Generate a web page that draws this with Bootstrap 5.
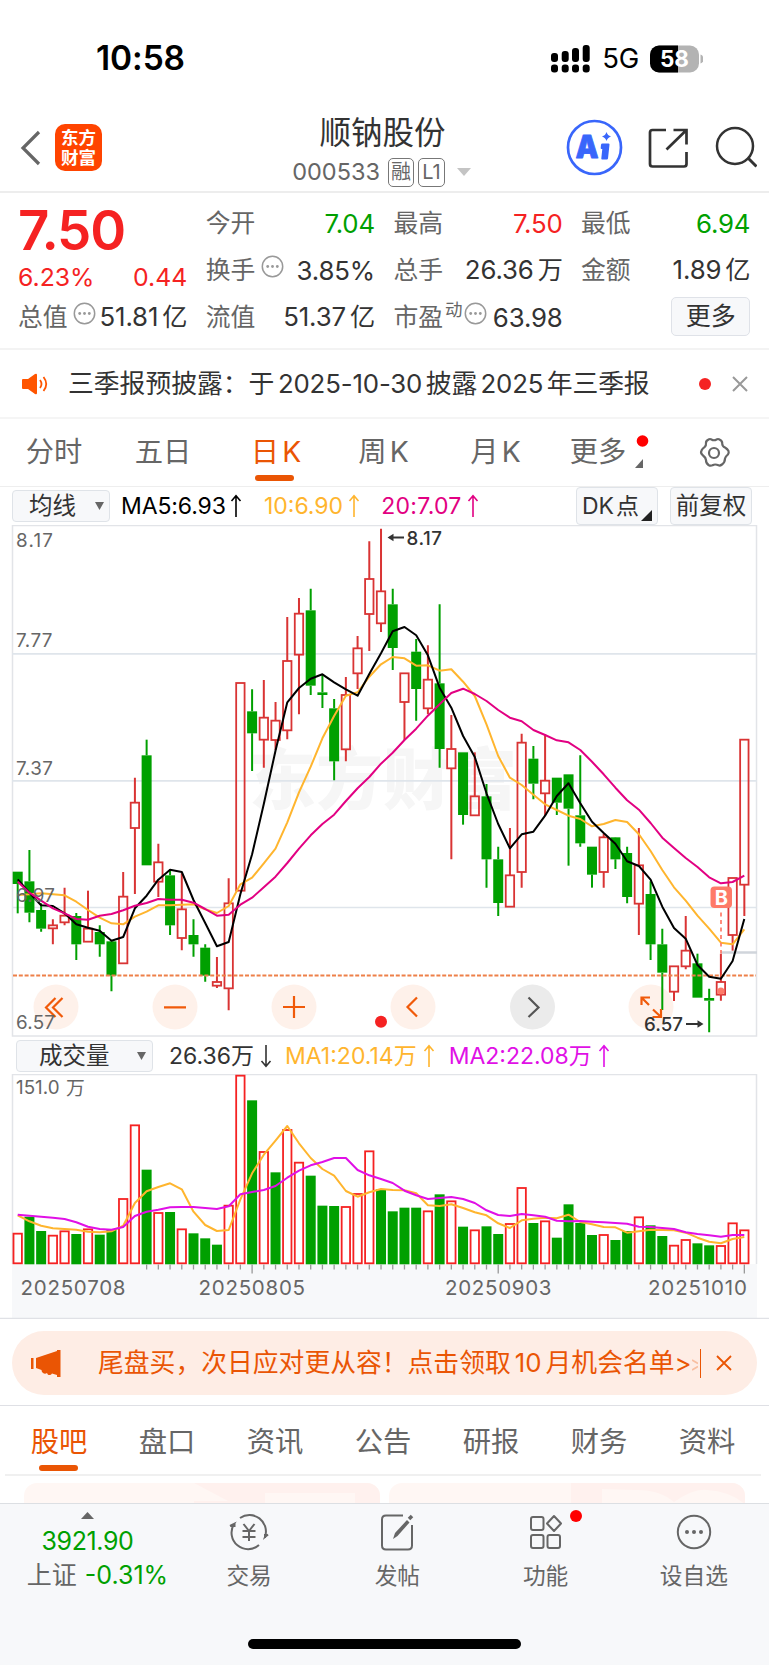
<!DOCTYPE html>
<html lang="zh-CN">
<head>
<meta charset="utf-8">
<meta name="viewport" content="width=device-width, initial-scale=1">
<title>顺钠股份 000533</title>
<link href="https://cdn.jsdelivr.net/npm/bootstrap@5.3.0/dist/css/bootstrap.min.css" rel="stylesheet">
<style>
:root{--up:#f52222;--down:#00a000;--brand:#ea5504;--ink:#333;--mute:#666;--rule:#e4e6ea}
body{font-family:Inter,"Noto Sans CJK SC",sans-serif;color:var(--ink);background:#fff;width:769px;height:1665px;overflow:hidden;line-height:1}
body>*{flex-shrink:0}
svg{display:block;flex:none}
.up{color:var(--up)}.down{color:var(--down)}.mute{color:var(--mute)}.brand{color:var(--brand)}
.thin{margin-left:4px}
.status{height:96px;padding:22px 66px 0 96px}
.clock{font-size:33.5px;font-weight:600;color:#000;letter-spacing:-.1px}
.net{font-size:27.5px;color:#000;letter-spacing:-.3px;margin:0 11px 0 12px}
.titlebar{height:97px;border-bottom:2px solid #ededed;padding:8px 12px 0 20px}
.logo{width:47px;height:47px;border-radius:10px;background:#ff4400;color:#fff;font-size:17.5px;font-weight:700;line-height:20px;margin-left:14px}
.stock-name{font-size:31.5px;height:41px}
.code{font-size:23.5px;letter-spacing:0;color:var(--mute)}
.tag{border:1.5px solid #777;border-radius:5px;height:29px;font-size:20px;color:var(--mute)}
.quote{display:grid;grid-template-columns:repeat(4,169.3px);column-gap:18.4px;height:157px;padding:7px 18px 0;border-bottom:2px solid #f3f3f3;font-size:24.8px}
.cell{height:47px}
.cell .num{font-size:25.8px;letter-spacing:-.15px}
.cell .thin{font-size:25.2px}
.price{font-size:54.5px;font-weight:600;letter-spacing:-1.2px;height:60px}
.more{width:79px;height:39px;border:1.5px solid #dfe2e8;border-radius:5px;background:#f7f8fa;font-size:25px}
.sup{font-size:17.5px}
.notice{height:69px;border-bottom:2px solid #f5f5f5;padding:0 21px;font-size:25.8px}
.notice .thin{margin-left:3.5px;letter-spacing:-.15px}
.periods{display:grid;grid-template-columns:108px 110px 116px 99px 125px 80px 131px;height:68px;border-bottom:1px solid #eee;font-size:28.3px;color:var(--mute)}
.underbar{position:absolute;height:6px;width:39px;border-radius:3px;background:var(--brand);left:50%;margin-left:-20px}
.tools{height:38px;padding:0 17px 0 12px;font-size:23px}
.pick{height:32px;border:1.5px solid #dfe3e8;border-radius:4px;background:#f7f8fa}
.axis-txt{font:18.8px Inter,"Noto Sans CJK SC",sans-serif;fill:#666}
.banner{height:64px;margin:12px 12px 0;border-radius:32px;background:#feede5;color:var(--brand);font-size:25.8px;padding:0 25px 0 18px}
.pages{height:70px;margin:0 8px 0 5px;border-bottom:2px solid #f0f0f0;font-size:28.3px;color:var(--mute);padding-top:4px}
.promo{height:21px;border-radius:13px 13px 0 0;background:#fff7f4;overflow:hidden}
.dock{height:162px;background:#f7f8fa;border-top:1.5px solid #dcdfe3;color:var(--mute);font-size:22.7px}
.dot{width:12px;height:12px;border-radius:50%;background:#f52222}
.home-bar{width:273px;height:10px;border-radius:5px;background:#000;margin:0 auto}
</style>
</head>
<body class="d-flex flex-column m-0">

<header class="status d-flex align-items-center">
  <div class="clock">10:58</div>
  <div class="ms-auto d-flex align-items-center">
    <svg width="40" height="28" viewBox="0 0 40 28"><rect x="1" y="8" width="7" height="9" rx="3"/><rect x="11.700" y="6" width="7" height="11" rx="3"/><rect x="22" y="3" width="7" height="14" rx="3"/><rect x="32.700" y="0" width="7" height="17" rx="3"/><rect x="1" y="19.500" width="7" height="8" rx="3"/><rect x="11.700" y="19.500" width="7" height="8" rx="3"/><rect x="22" y="19.500" width="7" height="8" rx="3"/><rect x="32.700" y="19.500" width="7" height="8" rx="3"/></svg>
    <span class="net">5G</span>
    <svg width="53" height="28" viewBox="0 0 53 28"><defs><clipPath id="bat"><rect x="0" y=".5" width="49" height="27" rx="9"/></clipPath></defs><g clip-path="url(#bat)"><rect width="49" height="28" fill="#b3b3b3"/><rect width="28" height="28"/></g><path d="M50.500 9.500q3 1 3 4.500t-3 4.500z" fill="#b3b3b3"/><text x="24.500" y="22.300" text-anchor="middle" font-family="Inter" font-weight="700" font-size="22.500" fill="#fff">58</text></svg>
  </div>
</header>

<nav class="titlebar d-flex align-items-center position-relative">
  <svg width="21" height="36" viewBox="0 0 21 36" fill="none" stroke="#666" stroke-width="3.200"><path d="M19 2 3 18l16 16"/></svg>
  <div class="logo d-flex flex-column align-items-center justify-content-center"><span>东方</span><span>财富</span></div>
  <div class="d-flex flex-column align-items-center ms-auto" style="margin-right:93px;padding-top:8px">
    <div class="stock-name">顺钠股份</div>
    <div class="d-flex align-items-center"><span class="code">000533</span><span class="tag d-flex align-items-center justify-content-center ms-2" style="width:26px">融</span><span class="tag d-flex align-items-center justify-content-center ms-1" style="width:27px">L1</span><svg class="ms-2" width="20" height="8" viewBox="0 0 20 8"><path d="M4 0h14l-7 8z" fill="#c4c4c4"/></svg></div>
  </div>
  <svg width="57" height="57" viewBox="0 0 57 57"><circle cx="28.500" cy="28.500" r="26.500" fill="#fff" stroke="#3966fb" stroke-width="2.700"/><text x="9.500" y="38.700" textLength="23" lengthAdjust="spacingAndGlyphs" font-family="Inter" font-weight="900" font-size="32" fill="#3966fb" stroke="#3966fb" stroke-width=".8" stroke-linejoin="round">A</text><path d="M36.500 24.500h6q1 0 1 1l-1.500 14q-.2 1-1.200 1h-4.600q-1 0-.9-1l1-9.500h-.8q-.9 0-.8-1l.3-3.300q.1-1.200 1.500-1.200z" fill="#3966fb"/><path d="M40.500 13q1 3.500 4.500 4.500-3.500 1-4.500 4.500-1-3.500-4.500-4.500 3.500-1 4.500-4.500z" fill="#3966fb"/></svg>
  <svg class="ms-4" width="44" height="44" viewBox="0 0 44 44" fill="none" stroke="#333" stroke-width="2.700" style="margin-right:24px"><path d="M19 4H5.500q-2.500 0-2.500 2.500v31.500q0 2.500 2.500 2.500H37q2.500 0 2.500-2.500V26M26.500 4h13v14.500M39.500 4 19.500 23.500"/></svg>
  <svg width="42" height="44" viewBox="0 0 42 44" fill="none" stroke="#333" stroke-width="2.500"><circle cx="20" cy="20" r="18"/><path d="M33 32 41.500 40.500" stroke-width="3"/></svg>
</nav>

<section class="quote">
  <div>
    <div class="price up d-flex align-items-center">7.50</div>
    <div class="up d-flex justify-content-between align-items-center" style="height:34px;letter-spacing:0"><span>6.23%</span><span>0.44</span></div>
    <div class="cell d-flex align-items-center"><span class="mute">总值</span><svg class="mb-2" style="margin-left:5px" width="23" height="23"><use href="#dots"/></svg><span class="num ms-auto">51.81<span class="thin">亿</span></span></div>
  </div>
  <div>
    <div class="cell d-flex align-items-center"><span class="mute">今开</span><span class="num ms-auto down">7.04</span></div>
    <div class="cell d-flex align-items-center"><span class="mute">换手</span><svg class="mb-2" style="margin-left:6px" width="23" height="23"><use href="#dots"/></svg><span class="num ms-auto">3.85%</span></div>
    <div class="cell d-flex align-items-center"><span class="mute">流值</span><span class="num ms-auto">51.37<span class="thin">亿</span></span></div>
  </div>
  <div>
    <div class="cell d-flex align-items-center"><span class="mute">最高</span><span class="num ms-auto up">7.50</span></div>
    <div class="cell d-flex align-items-center"><span class="mute">总手</span><span class="num ms-auto">26.36<span class="thin">万</span></span></div>
    <div class="cell d-flex align-items-center"><span class="mute">市盈</span><span class="mute sup mb-3" style="margin-left:2px">动</span><svg class="mb-2" style="margin-left:2px" width="23" height="23"><use href="#dots"/></svg><span class="num ms-auto">63.98</span></div>
  </div>
  <div>
    <div class="cell d-flex align-items-center"><span class="mute">最低</span><span class="num ms-auto down">6.94</span></div>
    <div class="cell d-flex align-items-center"><span class="mute">金额</span><span class="num ms-auto">1.89<span class="thin">亿</span></span></div>
    <div class="cell d-flex align-items-center justify-content-end"><span class="more d-flex align-items-center justify-content-center" style="margin-bottom:3px">更多</span></div>
  </div>
</section>

<section class="notice d-flex align-items-center">
  <svg width="28" height="22" viewBox="0 0 28 22"><path d="M1 7q0-1 1-1h5l7-5q2-1 2 1v18q0 2-2 1l-7-5H2q-1 0-1-1z" fill="#ff5500"/><path d="M19 7q3 4 0 8M22.500 4q5.500 7 0 14" stroke="#ff5500" stroke-width="1.800" fill="none"/></svg>
  <span class="text-nowrap" style="margin-left:19px">三季报预披露：于<span class="thin">2025-10-30</span><span class="thin">披露</span><span class="thin">2025</span><span class="thin">年三季报</span></span>
  <span class="dot ms-auto" style="margin-right:21px"></span>
  <svg width="16" height="16" viewBox="0 0 16 16" stroke="#999" stroke-width="2"><path d="M1 1 15 15M15 1 1 15"/></svg>
</section>

<nav class="periods">
  <div class="d-flex align-items-center justify-content-center">分时</div>
  <div class="d-flex align-items-center justify-content-center">五日</div>
  <div class="d-flex align-items-center justify-content-center brand position-relative">日<span style="margin-left:3px">K</span><span class="underbar" style="top:56px;margin-left:-21px"></span></div>
  <div class="d-flex align-items-center justify-content-center">周<span style="margin-left:3px">K</span></div>
  <div class="d-flex align-items-center justify-content-center">月<span style="margin-left:3px">K</span></div>
  <div class="d-flex align-items-center justify-content-center position-relative">更多<svg class="position-absolute" style="left:78px;top:16px" width="13" height="14"><circle cx="6.500" cy="6" r="5.800" fill="#f00"/></svg><svg class="position-absolute" style="left:77px;top:40px" width="8" height="9"><path d="M8 0v9H0z" fill="#666"/></svg></div>
  <div class="d-flex align-items-center justify-content-center" style="padding-left:20px"><svg width="34" height="32" viewBox="0 0 34 32" fill="none" stroke="#666" stroke-width="2.200" stroke-linejoin="round"><path d="M11.500 2.500q1.500-1 3 0 2.500 1.500 5 0 1.500-1 3 0 3 1.500 2.700 4 .1 3 2.800 4 2.500 1.500 3.500 3.500.7 2-.6 3.500-2.400 2-2.900 4-.1 4-3 6-2 1.500-3.500.8-3.500-1.600-6 0-2 .9-4-.3-2.700-2-2.500-5-.4-2.700-3-4.500-3-2.500-1.500-5 1-2 3-3.400 1.800-1.600 1.500-4-.3-2.100 2.500-3.600z"/><circle cx="17" cy="16" r="5"/></svg></div>
</nav>

<div class="tools d-flex align-items-center">
  <span class="pick d-flex align-items-center" style="width:98px;padding-left:16px;font-size:23.500px">均线<svg class="ms-auto me-1" width="10" height="8"><path d="M0 0h9L4.500 8z" fill="#666"/></svg></span>
  <span style="color:#000;margin-left:11px;letter-spacing:-.1px">MA5:6.93</span><svg width="12" height="24" style="margin-left:4px;color:#000"><use href="#arr"/></svg>
  <span style="color:#ffb52e;margin-left:22px">10:6.90</span><svg width="12" height="24" style="margin-left:5px;color:#ffb52e"><use href="#arr"/></svg>
  <span style="color:#e20082;margin-left:21px;letter-spacing:.3px">20:7.07</span><svg width="12" height="24" style="margin-left:5px;color:#e20082"><use href="#arr"/></svg>
  <span class="pick d-flex align-items-center ms-auto position-relative" style="width:82px;height:38px;padding-left:5px">DK<span style="margin-left:2px">点</span><svg class="position-absolute end-0 bottom-0" style="margin:0 5px 3px" width="11" height="11"><path d="M11 0v11H0z" fill="#222"/></svg></span>
  <span class="pick d-flex align-items-center justify-content-center" style="width:82px;height:38px;margin-left:12px;font-size:23.500px">前复权</span>
</div>

<svg id="kline" width="769" height="512" viewBox="0 525 769 512">
  <text x="249" y="804" font-family="Noto Sans CJK SC" font-weight="900" font-size="67" fill="#f6f6f6">东方财富</text>
  <rect x="12.500" y="525.500" width="744" height="510.500" fill="none" stroke="#e2e4e8" stroke-width="1.500"/>
  <path d="M12 653.800H757M12 780.800H757M12 907.500H757" stroke="#dfe5eb" stroke-width="1.700"/>
  <path d="M721 952.500h36" stroke="#d0d5db" stroke-width="2.500"/>
  <g><g fill="#fef1ea"><circle cx="56" cy="1007" r="22.500"/><circle cx="175" cy="1007" r="22.500"/><circle cx="294" cy="1007" r="22.500"/><circle cx="413" cy="1007" r="22.500"/><circle cx="651" cy="1007" r="22.500"/></g><circle cx="532.500" cy="1007" r="22.500" fill="#ebebeb"/></g>
  <g id="candles"></g>
  <path d="M13 975.500H756" stroke="#ee8049" stroke-width="1.800" stroke-dasharray="4 1.800"/>
  <g id="averages" fill="none" stroke-width="2" stroke-linejoin="round"></g>
  <g fill="none" stroke="#f05a0a" stroke-width="2.200"><path d="M55.500 998 46 1007.500 55.500 1017M62.500 998 53 1007.500 62.500 1017M164 1007.300H186M283 1007H305M294 996V1018M417 997.500 407.500 1007 417 1016.500"/><path d="M641.500 1005V997.500h8.500M641.500 997.500 649 1005M653 1009.500 661 1017M661 1009V1017h-8.500"/></g>
  <path d="M528.500 997.500 538.500 1007.500 528.500 1017" fill="none" stroke="#555" stroke-width="2.200"/>
  <circle cx="381" cy="1021.700" r="6" fill="#f52222"/>
  <path d="M721 912.500v41" stroke="#fe7a68" stroke-width="1.700" stroke-dasharray="4 3.500"/>
  <rect x="710.500" y="886.500" width="21.500" height="21.500" rx="4" fill="#fe7a68"/>
  <text x="721.300" y="904.500" text-anchor="middle" font-family="Inter" font-weight="700" font-size="20" fill="#fff">B</text>
  <g class="axis-txt"><text x="16" y="546.500" textLength="37">8.17</text><text x="16" y="646.500" textLength="36.500">7.77</text><text x="16" y="774.500" textLength="37">7.37</text><text x="16" y="901.500" textLength="39">6.97</text><text x="16" y="1029" textLength="39">6.57</text></g>
  <g font-family="Inter" font-weight="500" font-size="18.700" fill="#333"><text x="406.500" y="544.500" textLength="35.500">8.17</text><text x="644" y="1030.500" textLength="39">6.57</text></g>
  <path d="M404 537.500H390M686 1024H701" stroke="#333" stroke-width="1.800"/><path d="M387.500 537.500l6-3.700v7.400zM703.500 1024l-6-3.700v7.400z" fill="#333"/>
</svg>

<div class="tools d-flex align-items-center" style="height:37px;padding:1px 0 0 16px">
  <span class="pick d-flex align-items-center" style="width:137px;padding-left:22px;font-size:23.500px">成交量<svg class="ms-auto" style="margin-right:5px" width="10" height="8"><path d="M0 0h9L4.500 8z" fill="#666"/></svg></span>
  <span style="margin-left:16px">26.36万</span><svg width="12" height="24" style="margin-left:6px;transform:rotate(180deg)"><use href="#arr"/></svg>
  <span style="color:#ffb52e;margin-left:13px">MA1:20.14万</span><svg width="12" height="24" style="margin-left:6px;color:#ffb52e"><use href="#arr"/></svg>
  <span style="color:#e010e6;margin-left:14px">MA2:22.08万</span><svg width="12" height="24" style="margin-left:6px;color:#e010e6"><use href="#arr"/></svg>
</div>

<svg id="volume" width="769" height="245" viewBox="0 1074 769 245">
  <rect x="12" y="1264" width="745" height="54" fill="#f7f8fa"/>
  <path d="M12.500 1264V1074.500H756.500V1264" fill="none" stroke="#e2e4e8" stroke-width="1.500"/>
  <g id="bars"></g><g id="ticks" stroke="#999" stroke-width="1.300"></g>
  <g id="volavg" fill="none" stroke-width="2" stroke-linejoin="round"></g>
  <text class="axis-txt" x="16" y="1093.500">151.0</text><text class="axis-txt" x="66" y="1094.500">万</text>
  <g font-family="Inter" font-size="20.500" fill="#666"><text x="20.500" y="1294.500" textLength="105">20250708</text><text x="198.500" y="1294.500" textLength="106.500">20250805</text><text x="445" y="1294.500" textLength="106.500">20250903</text><text x="648" y="1294.500" textLength="99">20251010</text></g>
  <path d="M0 1318.300H769" stroke="#e0e1e6" stroke-width="1.300"/>
</svg>

<section style="height:87px;border-bottom:1px solid #dfe0e5">
  <div class="banner d-flex align-items-center">
    <svg width="32" height="27" viewBox="0 0 32 27" fill="#ea5504"><path d="M1 8h2.500v11H1zM6 8 27 1V0h3.500v27H27v-2l-5-1.500q-1 2-3.500 1.500-1-.5-1.500-2-2 1.500-4 0-1.500-1-1.500-3L6 18z"/></svg>
    <span class="text-nowrap" style="margin-left:36px">尾盘买，次日应对更从容！点击领取<span class="thin">10</span><span class="thin">月机会名单</span>&gt;</span>
    <svg style="margin-top:3px" width="6" height="14" viewBox="0 0 6 14"><path d="M0 2 6 5.500M6 8.500 0 12" stroke="#ea5504" stroke-opacity=".3" stroke-width="1.800"/></svg>
    <span class="ms-auto" style="width:1.500px;height:29px;background:#ea5504"></span>
    <svg style="margin-left:15px" width="16" height="16" viewBox="0 0 16 16" stroke="#ea5504" stroke-width="1.800"><path d="M1 1 15 15M15 1 1 15"/></svg>
  </div>
</section>

<nav class="pages d-flex text-center">
  <div class="flex-fill d-flex align-items-center justify-content-center brand position-relative">股吧<span class="underbar" style="top:55px"></span></div>
  <div class="flex-fill d-flex align-items-center justify-content-center">盘口</div>
  <div class="flex-fill d-flex align-items-center justify-content-center">资讯</div>
  <div class="flex-fill d-flex align-items-center justify-content-center">公告</div>
  <div class="flex-fill d-flex align-items-center justify-content-center">研报</div>
  <div class="flex-fill d-flex align-items-center justify-content-center">财务</div>
  <div class="flex-fill d-flex align-items-center justify-content-center">资料</div>
</nav>
<div class="d-flex" style="gap:9px;padding:7px 24px 0;height:27px">
  <div class="promo flex-fill"><svg width="356" height="21"><path d="M170 0H356V21H331V10H241V21H170V18H204z" fill="#fff1ee"/></svg></div>
  <div class="promo flex-fill"><svg width="356" height="21"><path d="M182 0H356V21Q340 8 318 7 305 5 285 19 270 6 245 7L213 6V21H182z" fill="#fff1ee"/></svg></div>
</div>

<footer class="dock d-flex flex-column">
  <div class="d-flex">
    <div class="d-flex flex-column align-items-center" style="width:175px;padding-top:8px;font-size:25px"><svg width="13" height="7"><path d="M6.500 0 13 7H0z" fill="#666"/></svg><span class="down" style="margin-top:10px;letter-spacing:-.4px">3921.90</span><span class="text-nowrap" style="margin-top:9px;margin-left:20px">上证<span class="down" style="margin-left:8px">-0.31%</span></span></div>
    <div class="flex-fill d-flex flex-column align-items-center" style="width:0;padding-top:8px"><svg width="42" height="40" viewBox="0 0 42 40" fill="none" stroke="#666" stroke-width="2"><path d="M12 6A16.500 16.500 0 0 1 37 25l3-2.500M37 26v-4M31 33A16.500 16.500 0 0 1 6 12L2 14M6.500 11v4"/><path d="M15.500 12l5.500 7 5.500-7M14.500 19h13M14.500 25h13M21 19v10"/></svg><span class="mt-2" style="padding-top:5px">交易</span></div>
    <div class="flex-fill d-flex flex-column align-items-center" style="width:0;padding-top:8px"><svg width="36" height="40" viewBox="0 0 36 40" fill="none" stroke="#666" stroke-width="2"><path d="M24 3.500H7Q3 3.500 3 7.500v26q0 4 4 4h22q4 0 4-4V13"/><path d="M14 27l2-6L28 8l2.500 2.500L18.500 24z" fill="#666" stroke="none"/><path d="M30 7l3-3" stroke-width="3.500"/></svg><span class="mt-2" style="padding-top:5px">发帖</span></div>
    <div class="flex-fill d-flex flex-column align-items-center position-relative" style="width:0;padding-top:8px"><svg width="34" height="40" viewBox="0 0 34 40" fill="none" stroke="#666" stroke-width="2"><rect x="2" y="5" width="12.500" height="13" rx="2"/><rect x="2" y="23" width="12.500" height="13" rx="2"/><rect x="18.500" y="23" width="12.500" height="13" rx="2"/><path d="M25 4 32 11.500 25 19 18 11.500z" stroke-linejoin="round"/></svg><span class="mt-2" style="padding-top:5px">功能</span><span class="dot position-absolute" style="left:98px;top:6px;background:#f00"></span></div>
    <div class="flex-fill d-flex flex-column align-items-center" style="width:0;padding-top:8px;margin-right:1px"><svg width="40" height="40" viewBox="0 0 40 40"><circle cx="20" cy="20" r="16.200" fill="none" stroke="#666" stroke-width="2"/><g fill="#666"><circle cx="13" cy="20" r="2"/><circle cx="20" cy="20" r="2"/><circle cx="27" cy="20" r="2"/></g></svg><span class="mt-2" style="padding-top:5px">设自选</span></div>
  </div>
  <div class="home-bar mt-auto" style="margin-bottom:16px"></div>
</footer>

<svg width="0" height="0" class="position-absolute"><defs>
  <symbol id="dots" viewBox="0 0 23 23"><circle cx="11.500" cy="11.500" r="10.200" fill="none" stroke="#999" stroke-width="1.500"/><g fill="#999"><circle cx="6.700" cy="11.500" r="1.400"/><circle cx="11.500" cy="11.500" r="1.400"/><circle cx="16.300" cy="11.500" r="1.400"/></g></symbol>
  <symbol id="arr" viewBox="0 0 12 24"><path d="M6 23V2M1.500 7 6 1.800 10.500 7" fill="none" stroke="currentColor" stroke-width="1.600"/></symbol>
</defs></svg>

<script src="https://cdn.jsdelivr.net/npm/bootstrap@5.3.0/dist/js/bootstrap.bundle.min.js"></script>
<script>
// Each candle: direction, high, body top, body bottom, low (thirds of a pixel below y0)
const K = `G 1055 1055 1092 1180|G 990 1084 1178 1207|G 1150 1170 1226 1235|R 1198 1216 1225 1273|R 1103 1187 1207 1216|G 1179 1188 1273 1320|R 1112 1226 1265 1265|G 1216 1236 1273 1310|G 1262 1264 1367 1414|R 1056 1130 1330 1330|R 773 848 924 1122|G 659 706 1036 1036|R 971 1027 1085 1131|G 1047 1066 1216 1245|R 1060 1168 1254 1291|G 1198 1245 1273 1310|G 1273 1283 1367 1385|R 1311 1386 1397 1404|R 1075 1150 1405 1471|R 489 489 1112 1112|G 508 574 640 753|R 480 593 659 743|R 546 602 660 690|R 291 423 631 658|R 234 281 404 583|G 206 271 497 525|G 462 517 525 564|G 537 565 724 781|R 471 525 688 724|R 348 385 460 507|R 64 177 282 393|R 26 214 310 336|G 206 253 384 450|R 460 460 546 660|G 357 395 507 602|R 376 479 565 583|G 253 490 687 743|R 585 687 745 1018|G 697 697 885 914|R 697 829 886 886|G 792 829 1018 1103|G 980 1018 1149 1188|R 924 1066 1160 1160|R 641 668 1056 1103|G 678 716 791 838|R 643 782 820 886|G 773 773 848 885|G 763 763 866 1037|G 706 886 970 980|G 980 980 1064 1103|R 941 952 1056 1103|G 951 952 1018 1047|G 980 999 1131 1150|R 924 1036 1151 1245|G 1084 1122 1273 1320|G 1226 1273 1358 1470|R 1339 1339 1415 1443|R 1188 1292 1339 1348|G 1301 1330 1433 1433|G 1406 1434 1442 1537|R 1301 1386 1424 1442|R 1074 1074 1245 1292|R 659 659 1094 1188`.split('|').map(s=>s.split(' '));
const MA = {
 '#ffb52e':[1125,1123,1120,1123,1126,1145,1170,1193,1210,1213,1190,1175,1156,1156,1154,1153,1168,1179,1158,1093,1073,1030,986,907,817,740,655,588,527,517,470,433,411,415,437,436,452,448,485,528,613,708,773,795,824,853,870,887,897,919,912,900,906,943,993,1050,1102,1142,1187,1226,1268,1273,1228],
 '#000':[1078,1118,1156,1158,1180,1213,1223,1232,1262,1251,1165,1127,1079,1049,1056,1140,1209,1279,1266,1122,1003,852,692,547,504,476,463,487,508,527,462,400,334,321,346,406,503,563,648,711,820,912,985,943,935,887,828,790,850,905,939,971,1024,1038,1079,1160,1224,1256,1335,1370,1376,1323,1197],
 '#e20082':[1085,1118,1142,1165,1180,1197,1199,1187,1182,1171,1157,1149,1137,1139,1139,1148,1167,1187,1184,1154,1133,1102,1070,1029,986,946,912,884,843,805,771,731,698,660,626,587,553,519,506,522,543,570,593,604,630,645,661,667,690,725,763,803,841,869,909,953,984,1014,1041,1072,1090,1086,1067]};
const V = 'R611 G560 G603 R617 R604 G612 R598 G614 G600 R507 R286 G419 R549 G546 R598 G610 G625 G644 R527 R137 G211 R366 G427 R300 R398 G437 G527 G528 R531 R492 R364 G478 G544 G533 G533 R544 G493 R514 G590 R601 G589 G612 R582 R474 G579 R574 G623 G523 G579 G615 R615 G630 G603 R562 G586 G618 R647 R630 G640 G646 R648 R580 R601'.split(' ');
const VM = {
 '#ffb52e':[556,574,587,595,597,599,605,607,604,587,519,484,471,460,478,545,585,603,600,508,430,374,332,288,340,384,417,437,483,500,487,477,480,481,490,526,528,523,534,547,556,580,594,571,566,563,565,554,576,583,591,592,608,604,599,600,601,608,623,635,640,627,621],
 '#e010e6':[554,557,560,563,567,577,590,597,599,591,558,545,539,532,531,531,534,537,529,493,486,480,468,443,422,406,396,384,384,420,436,447,459,482,496,507,504,501,507,519,541,555,558,552,556,560,572,574,573,575,577,579,581,590,591,594,597,607,612,616,620,615,615]};
const X = i => 17.7 + i * 11.72, P = v => 520 + v / 3, Q = v => 1030 + v / 3;
const line = (a, f, c) => `<polyline stroke="${c}" points="${a.map((v,i)=>X(i).toFixed(1)+','+f(v).toFixed(1)).join(' ')}"/>`;
const box = (x, t, b, up, c) => up
  ? `<rect x="${x-4.2}" y="${t}" width="8.4" height="${Math.max(b-t,1)}" fill="none" stroke="${c}" stroke-width="1.8"/>`
  : `<rect x="${x-5}" y="${t}" width="10" height="${b-t}" fill="#00a000"/>`;
document.getElementById('candles').innerHTML = K.map(([d,h,t,b,l],i)=>{
  const up = d === 'R', c = up ? '#d93434' : '#00a000', x = X(i);
  return `<path d="M${x} ${P(+h)}V${P(+t)}M${x} ${P(+b)}V${P(+l)}" stroke="${c}" stroke-width="2"/>` + box(x, P(+t), P(+b), up, c);
}).join('') + `<circle cx="${X(60)}" cy="991" r="3.500" fill="#fe7a68"/>`;
document.getElementById('averages').innerHTML = Object.entries(MA).map(([c,a])=>line(a,P,c)).join('');
document.getElementById('bars').innerHTML = V.map((s,i)=>box(X(i), Q(+s.slice(1)), s[0]==='R'?1263.3:1264.3, s[0]==='R', '#f52222')).join('');
document.getElementById('volavg').innerHTML = Object.entries(VM).map(([c,a])=>line(a,Q,c)).join('');
document.getElementById('ticks').innerHTML = V.map((s,i)=> i<11 ? '' : `<path d="M${X(i)} 1264.5V${[20,41,62].includes(i)?1273.5:1269.5}"/>`).join('');
</script>
</body>
</html>
